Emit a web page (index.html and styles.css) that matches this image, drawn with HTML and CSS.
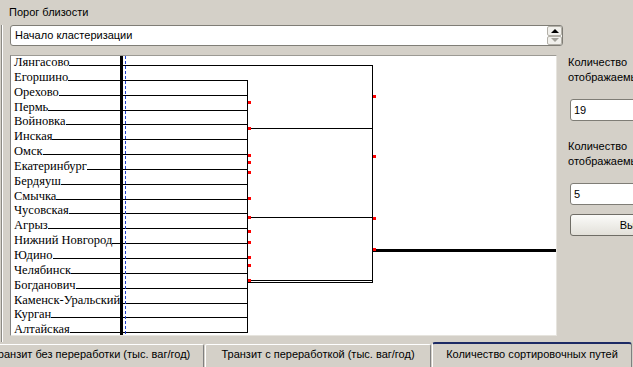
FILE: index.html
```html
<!DOCTYPE html>
<html lang="ru">
  <head>
    <meta charset="UTF-8" />
    <title>Кластеризация</title>
    <link rel="stylesheet" href="styles.css">
  </head>
  <body>
    <div class="caption">Порог близости</div>

    <div class="frame">
      <div class="combo">
        <div class="combo-text">Начало кластеризации</div>
        <div class="spin">
          <span class="up"></span>
          <span class="down"></span>
        </div>
      </div>

      <div class="work">
        <div class="chart">
          <div class="rows">
            <div class="row root"><span class="name">Лянгасово</span><span class="lead"></span></div>
            <div class="row"><span class="name">Егоршино</span><span class="lead"></span></div>
            <div class="row"><span class="name">Орехово</span><span class="lead"></span></div>
            <div class="row"><span class="name">Пермь</span><span class="lead"></span></div>
            <div class="row"><span class="name">Войновка</span><span class="lead"></span></div>
            <div class="row"><span class="name">Инская</span><span class="lead"></span></div>
            <div class="row"><span class="name">Омск</span><span class="lead"></span></div>
            <div class="row"><span class="name">Екатеринбург</span><span class="lead"></span></div>
            <div class="row"><span class="name">Бердяуш</span><span class="lead"></span></div>
            <div class="row"><span class="name">Смычка</span><span class="lead"></span></div>
            <div class="row"><span class="name">Чусовская</span><span class="lead"></span></div>
            <div class="row"><span class="name">Агрыз</span><span class="lead"></span></div>
            <div class="row"><span class="name">Нижний Новгород</span><span class="lead"></span></div>
            <div class="row"><span class="name">Юдино</span><span class="lead"></span></div>
            <div class="row"><span class="name">Челябинск</span><span class="lead"></span></div>
            <div class="row"><span class="name">Богданович</span><span class="lead"></span></div>
            <div class="row"><span class="name">Каменск-Уральский</span><span class="lead"></span></div>
            <div class="row"><span class="name">Курган</span><span class="lead"></span></div>
            <div class="row"><span class="name">Алтайская</span><span class="lead"></span></div>
          </div>

          <!-- links of the tree, drawn over the rows -->
          <svg class="lines" width="545" height="279" shape-rendering="crispEdges">
            <rect x="109" y="0" width="3" height="279" fill="#000" />
            <line x1="114.5" y1="0" x2="114.5" y2="279" stroke="#1f3fcf" stroke-dasharray="3 2" />
            <line x1="236.5" y1="24" x2="236.5" y2="277" stroke="#000" />
            <line x1="361.5" y1="9" x2="361.5" y2="227" stroke="#000" />
            <line x1="236" y1="72.5" x2="362" y2="72.5" stroke="#000" />
            <line x1="236" y1="161.5" x2="362" y2="161.5" stroke="#000" />
            <line x1="236" y1="224.5" x2="362" y2="224.5" stroke="#000" />
            <line x1="236" y1="226.5" x2="362" y2="226.5" stroke="#000" />
            <rect x="361" y="193" width="184" height="3" fill="#000" />
            <g fill="#ff0000">
              <rect x="237" y="45" width="3" height="3" />
              <rect x="237" y="71" width="3" height="3" />
              <rect x="237" y="98" width="3" height="3" />
              <rect x="237" y="105" width="3" height="3" />
              <rect x="237" y="115" width="3" height="3" />
              <rect x="237" y="141" width="3" height="3" />
              <rect x="237" y="160" width="3" height="3" />
              <rect x="237" y="174" width="3" height="3" />
              <rect x="237" y="185" width="3" height="3" />
              <rect x="237" y="200" width="3" height="3" />
              <rect x="237" y="208" width="3" height="3" />
              <rect x="237" y="223" width="3" height="3" />
              <rect x="362" y="39" width="3" height="3" />
              <rect x="362" y="99" width="3" height="3" />
              <rect x="362" y="161" width="3" height="3" />
              <rect x="362" y="192" width="3" height="3" />
            </g>
          </svg>
        </div>

        <div class="side">
          <p class="lbl">Количество<br>отображаемых кластеров</p>
          <div class="field">19</div>
          <p class="lbl">Количество<br>отображаемых уровней</p>
          <div class="field">5</div>
          <div class="button">Выполнить</div>
        </div>
      </div>
    </div>

    <div class="tabs">
      <div class="tab">Транзит без переработки (тыс. ваг/год)</div>
      <div class="tab">Транзит с переработкой (тыс. ваг/год)</div>
      <div class="tab active">Количество сортировочных путей</div>
    </div>
  </body>
</html>
```
FILE: styles.css
```css
* {
  margin: 0;
  padding: 0;
  box-sizing: border-box;
}
body {
  background-color: #d4d0c8;
  color: #000;
  font-family: "Liberation Sans", Arial, sans-serif;
  font-size: 11px;
  width: 633px;
  height: 367px;
  overflow: hidden;
}
.caption {
  height: 25px;
  padding: 5px 0 0 9px;
  line-height: 14px;
}
.frame {
  height: 317px;
  margin-left: 1px;
  padding-left: 8px;
  border-left: 1px solid #8c8a84;
  box-shadow: inset 1px 0 #fff;
}
.combo {
  display: flex;
  width: 553px;
  height: 21px;
  background-color: #fff;
  border: 1px solid #7f7d76;
  border-radius: 3px;
}
.combo-text {
  flex: 1;
  padding-left: 4px;
  line-height: 19px;
}
.spin {
  display: flex;
  flex-direction: column;
  width: 15px;
}
.spin span {
  flex: 1;
  display: flex;
  align-items: center;
  justify-content: center;
  background-color: #f1f0ec;
  border: 1px solid #b3b0a8;
  border-radius: 2px;
}
.spin .up::before {
  content: "";
  border-left: 4px solid transparent;
  border-right: 4px solid transparent;
  border-bottom: 4px solid #000;
}
.spin .down::before {
  content: "";
  border-left: 4px solid transparent;
  border-right: 4px solid transparent;
  border-top: 4px solid #a3a19a;
}
.work {
  display: flex;
  margin-top: 9px;
}
.chart {
  position: relative;
  flex: none;
  width: 547px;
  height: 281px;
  background-color: #fff;
  border: 1px solid;
  border-color: #9c9a94 #e6e4de #e6e4de #808080;
  overflow: hidden;
  font-family: "Liberation Serif", "Times New Roman", serif;
  font-size: 12.5px;
}
.rows {
  width: 237px;
  margin-top: -1px;
}
.row {
  display: flex;
  height: 14.85px;
  padding-left: 3px;
}
.row.root {
  margin-right: -125px;
}
.name {
  line-height: 14.85px;
  white-space: nowrap;
}
.lead {
  flex: 1;
  margin-top: 10px;
  height: 0;
  border-top: 1px solid #000;
}
.lines {
  position: absolute;
  top: 0;
  left: 0;
}
.side {
  flex: none;
  width: 170px;
  margin-left: 11px;
  line-height: 15px;
  white-space: nowrap;
}
.field {
  width: 160px;
  height: 22px;
  margin: 14px 0 0 2px;
  padding-left: 3px;
  line-height: 20px;
  background-color: #fff;
  border: 1px solid #7f7d76;
  border-radius: 3px;
}
.field + .lbl {
  margin-top: 18px;
}
.button {
  width: 156px;
  height: 22px;
  margin: 9px 0 0 2px;
  line-height: 20px;
  text-align: center;
  background: linear-gradient(#fbfbf9, #e2e0d9);
  border: 1px solid #6f6d66;
  border-radius: 3px;
}
.tabs {
  display: flex;
  align-items: flex-end;
  height: 25px;
  margin-left: -22px;
}
.tab {
  flex: none;
  width: 226px;
  height: 23px;
  margin-right: 1px;
  padding-top: 3px;
  line-height: 13px;
  text-align: center;
  white-space: nowrap;
  border: 1px solid;
  border-bottom: none;
  border-color: #fff #808080 transparent #fff;
  border-radius: 2px 2px 0 0;
}
.tab.active {
  width: 200px;
  height: 25px;
  padding-top: 4px;
  border-top: 2px solid #1c2a64;
  border-radius: 3px 3px 0 0;
}
```
